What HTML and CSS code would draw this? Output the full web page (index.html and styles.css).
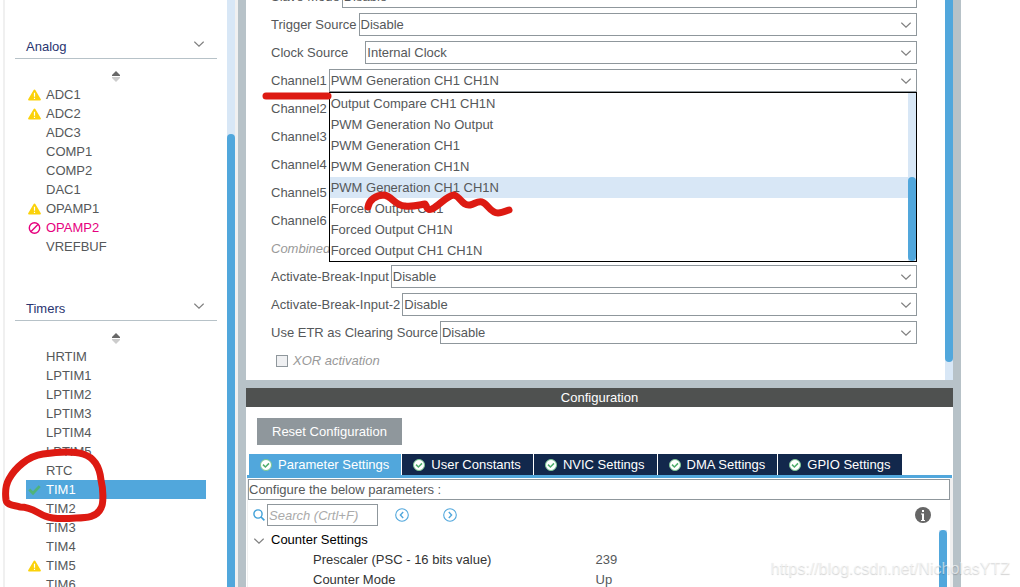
FILE: index.html
```
<!DOCTYPE html>
<html lang="en">

<head>
    <meta charset="UTF-8">
    <meta name="viewport" content="width=device-width, initial-scale=1.0">
    <title>TIM1 Mode and Configuration</title>
    <link rel="stylesheet" href="styles.css">
</head>

<body>
    <!-- Shared icons -->
    <svg class="icon-defs" aria-hidden="true">
        <symbol id="chevron" viewBox="0 0 10 6">
            <path d="M0.3 0.6 L5 5.1 L9.7 0.6" fill="none" stroke="#808080" stroke-width="1.3" />
        </symbol>
        <symbol id="sort" viewBox="0 0 8 11">
            <path d="M4 0 L8 4 V5 H0 V4 Z" fill="#686868" />
            <path d="M0 6 H8 V7 L4 11 L0 7 Z" fill="#cccccc" />
        </symbol>
        <symbol id="warning" viewBox="0 0 13 11">
            <path d="M6.5 0 Q7.1 0 7.5 0.7 L12.8 9.8 Q13.2 11 12 11 H1 Q-0.2 11 0.2 9.8 L5.5 0.7 Q5.9 0 6.5 0 Z" fill="#fbd20a" />
            <path d="M6.5 3.2 V7.2 M6.5 8.2 V9.6" stroke="#fff" stroke-width="1.2" />
        </symbol>
        <symbol id="banned" viewBox="0 0 12 12">
            <circle cx="6" cy="6" r="5.2" fill="none" stroke="#e6007e" stroke-width="1.4" />
            <path d="M2.6 9.4 L9.4 2.6" stroke="#e6007e" stroke-width="1.4" />
        </symbol>
        <symbol id="tick" viewBox="0 0 12 10">
            <path d="M1.2 4.6 L4.6 8 L10.8 1.4" fill="none" stroke="#4fb37a" stroke-width="2.6" />
        </symbol>
        <symbol id="ok" viewBox="0 0 12 12">
            <circle cx="6" cy="6" r="5.5" fill="#fff" stroke="#7cc794" stroke-width="1" />
            <path d="M3 5.6 L5.4 8 L9 4.4" fill="none" stroke="#4fae6c" stroke-width="1.5" />
        </symbol>
    </svg>

    <aside class="sidebar">
        <div class="categories">
            <section class="category">
                <h2 class="category-title">Analog <button aria-label="Collapse Analog"><svg class="chevron"><use href="#chevron" /></svg></button></h2>
                <button class="sort" aria-label="Sort Analog"><svg><use href="#sort" /></svg></button>
                <ul class="peripherals">
                    <li><svg><use href="#warning" /></svg>ADC1</li>
                    <li><svg><use href="#warning" /></svg>ADC2</li>
                    <li>ADC3</li>
                    <li>COMP1</li>
                    <li>COMP2</li>
                    <li>DAC1</li>
                    <li><svg><use href="#warning" /></svg>OPAMP1</li>
                    <li class="conflict"><svg><use href="#banned" /></svg>OPAMP2</li>
                    <li>VREFBUF</li>
                </ul>
            </section>
            <section class="category">
                <h2 class="category-title">Timers <button aria-label="Collapse Timers"><svg class="chevron"><use href="#chevron" /></svg></button></h2>
                <button class="sort" aria-label="Sort Timers"><svg><use href="#sort" /></svg></button>
                <ul class="peripherals">
                    <li>HRTIM</li>
                    <li>LPTIM1</li>
                    <li>LPTIM2</li>
                    <li>LPTIM3</li>
                    <li>LPTIM4</li>
                    <li>LPTIM5</li>
                    <li>RTC</li>
                    <li class="selected"><svg><use href="#tick" /></svg>TIM1</li>
                    <li>TIM2</li>
                    <li>TIM3</li>
                    <li>TIM4</li>
                    <li><svg><use href="#warning" /></svg>TIM5</li>
                    <li>TIM6</li>
                </ul>
            </section>
        </div>
        <div class="scrollbar sidebar-scroll"><div class="thumb"></div></div>
    </aside>

    <main class="content">
        <section class="mode">
            <form class="mode-form">
                <div class="row">
                    <label for="slave">Slave Mode</label>
                    <div class="field"><select id="slave"><option>Disable</option></select><svg class="chevron"><use href="#chevron" /></svg></div>
                </div>
                <div class="row">
                    <label for="trigger">Trigger Source</label>
                    <div class="field"><select id="trigger"><option>Disable</option></select><svg class="chevron"><use href="#chevron" /></svg></div>
                </div>
                <div class="row">
                    <label for="clock" class="spaced">Clock Source</label>
                    <div class="field"><select id="clock"><option>Internal Clock</option></select><svg class="chevron"><use href="#chevron" /></svg></div>
                </div>
                <div class="row">
                    <label for="channel1">Channel1</label>
                    <div class="field">
                        <select id="channel1"><option>PWM Generation CH1 CH1N</option></select><svg class="chevron"><use href="#chevron" /></svg>
                        <div class="popup">
                            <ul role="listbox" aria-label="Channel1 modes">
                                <li role="option">Output Compare CH1 CH1N</li>
                                <li role="option">PWM Generation No Output</li>
                                <li role="option">PWM Generation CH1</li>
                                <li role="option">PWM Generation CH1N</li>
                                <li role="option" class="active" aria-selected="true">PWM Generation CH1 CH1N</li>
                                <li role="option">Forced Output CH1</li>
                                <li role="option">Forced Output CH1N</li>
                                <li role="option">Forced Output CH1 CH1N</li>
                            </ul>
                            <div class="scrollbar popup-scroll"><div class="thumb"></div></div>
                        </div>
                    </div>
                </div>
                <div class="row">
                    <label for="channel2">Channel2</label>
                    <div class="field"><select id="channel2"></select></div>
                </div>
                <div class="row">
                    <label for="channel3">Channel3</label>
                    <div class="field"><select id="channel3"></select></div>
                </div>
                <div class="row">
                    <label for="channel4">Channel4</label>
                    <div class="field"><select id="channel4"></select></div>
                </div>
                <div class="row">
                    <label for="channel5">Channel5</label>
                    <div class="field"><select id="channel5"></select></div>
                </div>
                <div class="row">
                    <label for="channel6">Channel6</label>
                    <div class="field"><select id="channel6"></select></div>
                </div>
                <div class="row disabled">
                    <label for="combined">Combined</label>
                    <div class="field"><select id="combined" disabled></select></div>
                </div>
                <div class="row">
                    <label for="break1">Activate-Break-Input</label>
                    <div class="field"><select id="break1"><option>Disable</option></select><svg class="chevron"><use href="#chevron" /></svg></div>
                </div>
                <div class="row">
                    <label for="break2">Activate-Break-Input-2</label>
                    <div class="field"><select id="break2"><option>Disable</option></select><svg class="chevron"><use href="#chevron" /></svg></div>
                </div>
                <div class="row">
                    <label for="etr">Use ETR as Clearing Source</label>
                    <div class="field"><select id="etr"><option>Disable</option></select><svg class="chevron"><use href="#chevron" /></svg></div>
                </div>
                <div class="row disabled check-row">
                    <input type="checkbox" id="xor" disabled>
                    <label for="xor">XOR activation</label>
                </div>
            </form>
            <div class="scrollbar mode-scroll"><div class="thumb"></div></div>
        </section>

        <section class="configuration">
            <h1>Configuration</h1>
            <button class="reset">Reset Configuration</button>
            <nav class="tabs">
                <a href="#" class="tab current"><svg><use href="#ok" /></svg>Parameter Settings</a>
                <a href="#" class="tab"><svg><use href="#ok" /></svg>User Constants</a>
                <a href="#" class="tab"><svg><use href="#ok" /></svg>NVIC Settings</a>
                <a href="#" class="tab"><svg><use href="#ok" /></svg>DMA Settings</a>
                <a href="#" class="tab"><svg><use href="#ok" /></svg>GPIO Settings</a>
            </nav>
            <div class="tab-panel">
                <p class="hint">Configure the below parameters :</p>
                <div class="toolbar">
                    <label for="search" aria-label="Search">
                        <svg width="12" height="12" viewBox="0 0 12 12" fill="none" stroke="#3fa0d8">
                            <circle cx="5" cy="5" r="4.1" stroke-width="1.4" />
                            <path d="M8 8 L11.4 11.4" stroke-width="1.7" />
                        </svg>
                    </label>
                    <input type="text" id="search" placeholder="Search (Crtl+F)">
                    <button class="step" aria-label="Previous match">
                        <svg width="14" height="14" viewBox="0 0 14 14" fill="none" stroke="#51a7dc">
                            <circle cx="7" cy="7" r="6.3" stroke-width="1.1" />
                            <path d="M8.2 4 L5.4 7 L8.2 10" stroke-width="1.4" />
                        </svg>
                    </button>
                    <button class="step" aria-label="Next match">
                        <svg width="14" height="14" viewBox="0 0 14 14" fill="none" stroke="#51a7dc">
                            <circle cx="7" cy="7" r="6.3" stroke-width="1.1" />
                            <path d="M5.8 4 L8.6 7 L5.8 10" stroke-width="1.4" />
                        </svg>
                    </button>
                    <button class="info" aria-label="Information">
                        <svg width="16" height="16" viewBox="0 0 16 16">
                            <circle cx="8" cy="8" r="8" fill="#666" />
                            <path d="M7 3 H9 V5 H7 Z M6 6.4 H9 V13 H10 V14 H6 V13 H7 V7.4 H6 Z" fill="#fff" />
                        </svg>
                    </button>
                </div>
                <div class="parameters">
                    <table>
                        <thead>
                            <tr>
                                <th colspan="2"><button aria-label="Collapse Counter Settings"><svg class="chevron"><use href="#chevron" /></svg></button>Counter Settings</th>
                            </tr>
                        </thead>
                        <tbody>
                            <tr>
                                <th>Prescaler (PSC - 16 bits value)</th>
                                <td>239</td>
                            </tr>
                            <tr>
                                <th>Counter Mode</th>
                                <td>Up</td>
                            </tr>
                        </tbody>
                    </table>
                    <div class="scrollbar parameters-scroll"><div class="thumb"></div></div>
                </div>
            </div>
        </section>
    </main>

    <!-- Hand-drawn marks over the window -->
    <svg class="marks" width="520" height="587" viewBox="0 0 520 587" aria-hidden="true">
        <path d="M266 96 H328" />
        <path d="M368 207 C369 200 376 195 384 195 C392 196 395 206 405 206 C412 207 419 205 425 204 C427 206 426 211 432 209 C440 205 446 196 454 195 C461 197 462 206 470 205 C475 204 477 201 482 202 C488 204 490 213 498 213 C502 213 506 211 509 210" />
        <path d="M20 507 C15 505 7 506 6 500 C5 492 5 486 9 479 C15 468 28 456 43 454 C56 452 74 451 83 454 C96 458 100 470 101 480 C103 488 104 503 101 508 C97 517 87 518 76 518 C64 519 52 519 45 516 C37 513 32 507 20 507" />
    </svg>
    <div class="watermark">https://blog.csdn.net/NicholasYTZ</div>
</body>

</html>
```
FILE: styles.css
```
* {
    box-sizing: border-box;
}

body {
    position: relative;
    display: flex;
    height: 100vh;
    margin: 0;
    overflow: hidden;
    background-color: #fff;
    color: #55585a;
    font-family: "Liberation Sans", Arial, sans-serif;
    font-size: 13px;
    line-height: 19px;
}

h1,
h2,
p,
ul {
    margin: 0;
    padding: 0;
    font-size: 13px;
    font-weight: normal;
    list-style: none;
}

button,
input,
select {
    margin: 0;
    padding: 0;
    border: none;
    border-radius: 0;
    background: none;
    color: inherit;
    font: inherit;
}

button {
    display: flex;
    align-items: center;
    justify-content: center;
    cursor: pointer;
}

.icon-defs {
    position: absolute;
    width: 0;
    height: 0;
}

.chevron {
    width: 10px;
    height: 6px;
}

/* Scrollbars */
.scrollbar {
    display: flex;
    flex-direction: column;
    flex: none;
    width: 8px;
    background-color: #d8e7f6;
}

.thumb {
    flex: 1;
    border-radius: 4px;
    background-color: #51a7dc;
}

/* Peripheral list on the left */
.sidebar {
    display: flex;
    flex: none;
    width: 238px;
    padding-left: 3px;
    border-right: 3px solid #f0f0f0;
}

.categories {
    display: flex;
    flex: 1;
    flex-direction: column;
    gap: 6px;
    padding: 0 10px;
    border-left: 2px solid #f0f0f0;
}

.category-title {
    display: flex;
    align-items: flex-end;
    justify-content: space-between;
    height: 59px;
    padding: 0 13px 2px 11px;
    border-bottom: 1px solid #b7c2c8;
    color: #2a3570;
}

.category-title button {
    height: 24px;
}

.sort {
    width: 100%;
    height: 26px;
    padding-top: 8px;
}

.sort svg {
    width: 8px;
    height: 11px;
}

.peripherals {
    margin: 0 11px;
}

.peripherals li {
    display: flex;
    align-items: center;
    height: 19px;
    padding-left: 20px;
}

.peripherals svg {
    width: 13px;
    height: 12px;
    margin: 0 5px 0 -18px;
}

.peripherals .conflict {
    color: #e6007e;
}

.peripherals .selected {
    background-color: #51a7dc;
    color: #fff;
}

.sidebar-scroll {
    padding-top: 134px;
}

.sidebar-scroll .thumb {
    border-radius: 4px 4px 0 0;
}

/* Right side: mode on top, configuration below */
.content {
    display: flex;
    flex: 1;
    flex-direction: column;
    margin-right: 59px;
    border: solid #b7c2c8;
    border-width: 0 8px;
}

.mode {
    display: flex;
    flex: none;
    border-bottom: 8px solid #b7c2c8;
}

/* The form is scrolled down a little, so the first row is cut off */
.mode-form {
    display: flex;
    flex: 1;
    flex-direction: column;
    gap: 5px;
    margin-top: -15px;
    padding: 0 28px 8px 25px;
}

.mode-scroll {
    padding-bottom: 18px;
}

.mode-scroll .thumb {
    border-radius: 0 0 4px 4px;
}

.row {
    display: flex;
    align-items: center;
    gap: 2px;
    height: 23px;
}

.row label {
    white-space: nowrap;
}

.row .spaced {
    padding-right: 15px;
}

.field {
    position: relative;
    display: grid;
    flex: 1;
    align-items: center;
}

.field select,
.field > .chevron {
    grid-area: 1 / 1;
}

.field > .chevron {
    justify-self: end;
    margin-right: 6px;
    pointer-events: none;
}

select {
    width: 100%;
    height: 23px;
    padding: 0 1px;
    border: 1px solid #8f979c;
    background-color: #fff;
    appearance: none;
}

.disabled {
    color: #999;
    font-style: italic;
}

.check-row {
    gap: 5px;
    padding-left: 5px;
}

.check-row input {
    width: 12px;
    height: 12px;
    border: 1px solid #8f979c;
    background-color: #eff0f2;
    appearance: none;
}

.popup {
    position: absolute;
    z-index: 1;
    top: 100%;
    left: 0;
    display: flex;
    width: 100%;
    border: 1px solid #000;
    background-color: #fff;
}

.popup ul {
    flex: 1;
}

.popup li {
    height: 21px;
    padding-left: 1px;
    line-height: 21px;
}

.popup .active {
    background-color: #d8e7f6;
}

.popup-scroll {
    padding-top: 84px;
}

/* Configuration */
.configuration {
    display: flex;
    flex: 1;
    flex-direction: column;
    min-height: 0;
    overflow: hidden;
}

.configuration h1 {
    flex: none;
    background-color: #4f5150;
    color: #fff;
    text-align: center;
}

.reset {
    flex: none;
    align-self: flex-start;
    height: 27px;
    margin: 11px 11px 9px;
    padding: 0 15px;
    background-color: #8f979c;
    color: #fff;
}

.tabs {
    display: flex;
    flex: none;
    gap: 1px;
    margin: 0 1px;
    padding-left: 2px;
    border-bottom: 3px solid #51a7dc;
}

.tab {
    display: flex;
    align-items: center;
    gap: 6px;
    height: 21px;
    padding: 0 12px 0 11px;
    background-color: #12284c;
    color: #fff;
    text-decoration: none;
}

.tab svg {
    width: 12px;
    height: 12px;
}

.tab.current {
    background-color: #51a7dc;
}

.tab-panel {
    display: flex;
    flex: 1;
    flex-direction: column;
    margin-left: 1px;
    padding-top: 1px;
    border: solid #f0f0f0;
    border-width: 0 3px 0 1px;
}

.hint {
    border: 1px solid #8f979c;
}

.toolbar {
    display: flex;
    align-items: center;
    height: 30px;
    padding: 0 19px 0 5px;
}

.toolbar label,
.toolbar svg {
    display: block;
}

.toolbar input {
    width: 111px;
    height: 22px;
    margin: 0 17px 0 2px;
    padding: 0 1px;
    border: 1px solid #8f979c;
}

.toolbar input::placeholder {
    color: #aaa;
    font-style: italic;
}

.step {
    margin-right: 34px;
}

.info {
    margin-left: auto;
}

.parameters {
    display: flex;
    flex: 1;
    align-items: stretch;
    padding-right: 3px;
}

.parameters table {
    flex: 1;
    align-self: flex-start;
    border-collapse: collapse;
    table-layout: fixed;
    line-height: 20px;
}

.parameters th,
.parameters td {
    width: 50%;
    padding: 0;
    font-weight: normal;
    text-align: left;
}

.parameters th {
    color: #333;
}

.parameters thead th {
    color: #000;
}

.parameters thead button {
    display: inline-flex;
    margin: 0 7px 0 6px;
    vertical-align: middle;
}

.parameters tbody th {
    padding-left: 65px;
}

.parameters tbody td {
    padding-left: 2px;
}

.parameters-scroll .thumb {
    border-radius: 4px 4px 0 0;
}

.marks {
    position: absolute;
    z-index: 2;
    top: 0;
    left: 0;
    fill: none;
    stroke: #dd1a12;
    stroke-width: 7px;
    stroke-linecap: round;
    stroke-linejoin: round;
    pointer-events: none;
}

.watermark {
    position: absolute;
    z-index: 2;
    right: 10px;
    bottom: 9px;
    color: rgba(255, 255, 255, 0.6);
    font-size: 16px;
    text-shadow: 0 1px 1px rgba(0, 0, 0, 0.18);
    pointer-events: none;
}
```
